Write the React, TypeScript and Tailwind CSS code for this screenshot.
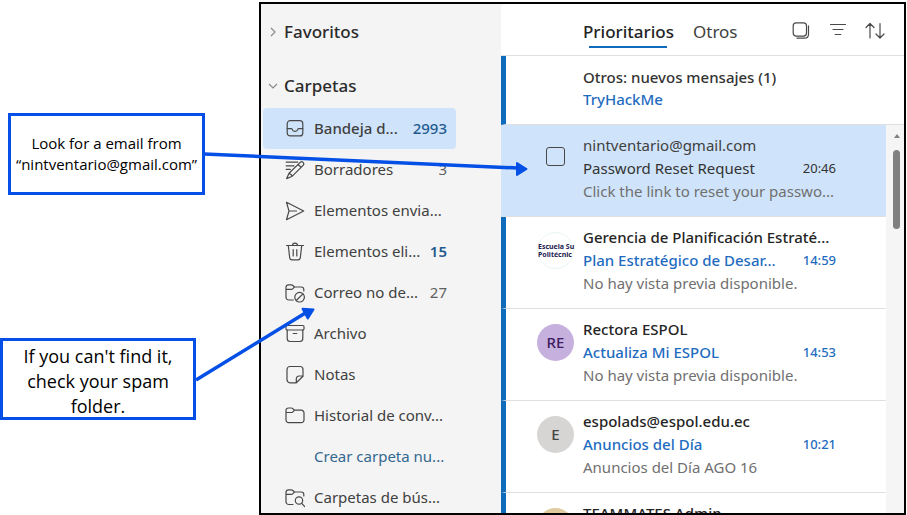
import React from "react";

const appFont = "font-['Noto_Sans','Open_Sans',sans-serif]";

type IconProps = { children: React.ReactNode };

function Icon({ children }: IconProps) {
  return (
    <svg
      viewBox="0 0 20 20"
      className="size-5 shrink-0"
      fill="none"
      stroke="#484848"
      strokeWidth="1.2"
      strokeLinecap="round"
      strokeLinejoin="round"
      aria-hidden="true"
    >
      {children}
    </svg>
  );
}

const icons = {
  inbox: (
    <Icon>
      <rect x="2.2" y="1.7" width="15.6" height="15.2" rx="3" />
      <path d="M2.2 9.600h4.100c.4 0 .7.3.9.7.3 1.200 1.400 2 2.800 2s2.500-.8 2.800-2c.2-.4.5-.7.9-.7h4.100" />
    </Icon>
  ),
  drafts: (
    <Icon>
      <path d="M1.200 2.200h11.500M1.200 5.800h7.800M1.200 9.400h4" />
      <path d="M15.200 2.400a2 2 0 0 1 2.900 2.900L7.300 16.200l-5.600 2.400 2.300-5.300zM13.200 4.500l2.900 2.900M4 13.300c1.600.4 2.700 1.300 3.300 2.900" />
    </Icon>
  ),
  sent: (
    <Icon>
      <path d="M1.500 1.300 18.700 10 1.500 18.700 4 10zM4 10h7.500" />
    </Icon>
  ),
  trash: (
    <Icon>
      <path d="M1.500 3.500h17M7.500 3.500c0-3.200 5-3.200 5 0M3.300 3.500l1.400 12.300c.2 1.300 1 2 2.200 2h6.200c1.200 0 2-.7 2.200-2L16.700 3.500M8.200 7.500v6.500M11.800 7.500v6.500" />
    </Icon>
  ),
  junk: (
    <Icon>
      <path d="M8.300 17H3.800A2.800 2.800 0 0 1 1 14.200V4.300c0-1.500 1-2.500 2.500-2.500h2.700c.7 0 1.200.2 1.700.7L9.500 4h6.700c1.500 0 2.600 1 2.600 2.500V8M1 6.300h5.200c.7 0 1.200-.2 1.700-.7L9.500 4" />
      <circle cx="14.600" cy="14.200" r="4.800" />
      <path d="m11.300 17.500 6.600-6.600" />
    </Icon>
  ),
  archive: (
    <Icon>
      <rect x="1" y="1.500" width="18" height="4.500" rx="1.200" />
      <path d="M2.200 6v8.500c0 1.700 1.300 3 3 3h9.600c1.700 0 3-1.300 3-3V6M8.200 9.500h3.600" />
    </Icon>
  ),
  notes: (
    <Icon>
      <path d="M5 1.500h10a3 3 0 0 1 3 3v6.800L11.300 17.800H5a3 3 0 0 1-3-3V4.500a3 3 0 0 1 3-3zM11.300 17.600v-3.600a3 3 0 0 1 3-3h3.500" />
    </Icon>
  ),
  folder: (
    <Icon>
      <path d="M1 4.500C1 3 2 2 3.500 2h2.700c.7 0 1.200.2 1.700.7L9.500 4.200h6.700A2.700 2.700 0 0 1 19 6.900v7.100a2.700 2.700 0 0 1-2.700 2.700H3.700A2.700 2.700 0 0 1 1 14zM1 6.500h5.200c.7 0 1.200-.2 1.700-.7l1.600-1.600" />
    </Icon>
  ),
  search: (
    <Icon>
      <path d="M8 16.500H3.800A2.800 2.800 0 0 1 1 13.700V4.300c0-1.500 1-2.500 2.500-2.500h2.700c.7 0 1.200.2 1.700.7L9.500 4h6.700c1.500 0 2.600 1 2.600 2.500V8M1 6.300h5.200c.7 0 1.200-.2 1.700-.7L9.500 4" />
      <circle cx="14" cy="12.500" r="3.700" />
      <path d="m16.700 15.300 3 3.200" />
    </Icon>
  ),
};

type Folder = {
  name: string;
  icon?: React.ReactNode;
  count?: string;
  kind?: "selected" | "strong" | "link";
};

const folders: Folder[] = [
  { name: "Bandeja d...", icon: icons.inbox, count: "2993", kind: "selected" },
  { name: "Borradores", icon: icons.drafts, count: "3" },
  { name: "Elementos envia...", icon: icons.sent },
  { name: "Elementos eli...", icon: icons.trash, count: "15", kind: "strong" },
  { name: "Correo no de...", icon: icons.junk, count: "27" },
  { name: "Archivo", icon: icons.archive },
  { name: "Notas", icon: icons.notes },
  { name: "Historial de conv...", icon: icons.folder },
  { name: "Crear carpeta nu...", kind: "link" },
  { name: "Carpetas de bús...", icon: icons.search },
];

function FolderRow({ name, icon, count, kind }: Folder) {
  const selected = kind === "selected";
  return (
    <li>
      <button
        type="button"
        className={`flex h-[41px] w-full items-center rounded pr-[9px] pl-[22px] text-left text-[15px] whitespace-nowrap ${
          selected ? "bg-[#cfe4fa] font-medium" : ""
        }`}
      >
        <span className="mr-[9px] flex w-5 shrink-0">{icon}</span>
        <span className={`flex-1 ${kind === "link" ? "text-[#33688f]" : "text-[#404040]"}`}>{name}</span>
        {count && (
          <span
            className={
              selected
                ? "font-medium text-[#1f5a8f]"
                : kind === "strong"
                  ? "font-semibold text-[#1f5a8f]"
                  : "text-[#616161]"
            }
          >
            {count}
          </span>
        )}
      </button>
    </li>
  );
}

function SectionTitle({ label, open }: { label: string; open: boolean }) {
  return (
    <button
      type="button"
      aria-expanded={open}
      className="flex h-[44px] w-full items-center pl-[5px] text-left text-[17px] font-medium text-[#2b2b2b]"
    >
      <svg
        viewBox="0 0 10 10"
        className="mr-[6px] size-[10px]"
        fill="none"
        stroke="#8a8a8a"
        strokeWidth="1.200"
        aria-hidden="true"
      >
        {open ? <path d="m1 3 4 4 4-4" /> : <path d="m3 1 4 4-4 4" />}
      </svg>
      {label}
    </button>
  );
}

function Sidebar() {
  return (
    <nav className="w-60 shrink-0 bg-[#f4f4f4] pt-[6px] pr-[45px] pl-[2px]">
      <SectionTitle label="Favoritos" open={false} />
      <div className="pt-[10px]">
        <SectionTitle label="Carpetas" open />
        <ul>
          {folders.map((folder) => (
            <FolderRow key={folder.name} {...folder} />
          ))}
        </ul>
      </div>
    </nav>
  );
}

type Mail = {
  from: string;
  subject?: string;
  time?: string;
  preview?: string;
  avatar: React.ReactNode;
  selected?: boolean;
};

function Initials({ text, tone }: { text?: string; tone: string }) {
  return (
    <span className={`flex size-[37px] items-center justify-center rounded-full text-[15px] font-medium ${tone}`}>
      {text}
    </span>
  );
}

const mails: Mail[] = [
  {
    from: "nintventario@gmail.com",
    subject: "Password Reset Request",
    time: "20:46",
    preview: "Click the link to reset your passwo...",
    selected: true,
    avatar: (
      <input
        type="checkbox"
        aria-label="Seleccionar mensaje"
        className="mt-[7px] size-[19px] appearance-none rounded-[3px] border border-[#484848]"
      />
    ),
  },
  {
    from: "Gerencia de Planificación Estraté...",
    subject: "Plan Estratégico de Desar...",
    time: "14:59",
    preview: "No hay vista previa disponible.",
    avatar: (
      <span className="flex size-[37px] flex-col justify-center rounded-full border border-[#e8f5f3] text-[7px] leading-[8px] font-bold whitespace-nowrap text-[#1d1b4f]">
        <span>Escuela Su</span>
        <span>Politécnic</span>
      </span>
    ),
  },
  {
    from: "Rectora ESPOL",
    subject: "Actualiza Mi ESPOL",
    time: "14:53",
    preview: "No hay vista previa disponible.",
    avatar: <Initials text="RE" tone="bg-[#c6b1de] text-[#3f1b5f]" />,
  },
  {
    from: "espolads@espol.edu.ec",
    subject: "Anuncios del Día",
    time: "10:21",
    preview: "Anuncios del Día AGO 16",
    avatar: <Initials text="E" tone="bg-[#d6d5d4] text-[#444444]" />,
  },
  {
    from: "TEAMMATES Admin",
    avatar: <Initials tone="bg-[#dfcb9f]" />,
  },
];

function MailRow({ from, subject, time, preview, avatar, selected }: Mail) {
  return (
    <li
      className={`flex h-[92px] shrink-0 border-b border-b-[#e0e0e0] border-l-[5px] pt-[9px] pr-[50px] text-[15px] leading-[23px] whitespace-nowrap ${
        selected ? "border-l-[#cfe4fa] bg-[#cfe4fa]" : "border-l-[#0f6cbd] bg-white"
      }`}
    >
      <div className="flex w-[77px] shrink-0 justify-center pt-[6px] pl-[22px]">
        <span className="flex w-[55px] justify-center">{avatar}</span>
      </div>
      <div className="min-w-0 flex-1">
        <div className={selected ? "text-[#404040]" : "font-medium text-[#242424]"}>{from}</div>
        <div
          className={`flex items-center justify-between ${
            selected ? "text-[#333333]" : "font-medium text-[#1f6cbf]"
          }`}
        >
          <span>{subject}</span>
          <time className="text-[13px]">{time}</time>
        </div>
        <div className="text-[#707070]">{preview}</div>
      </div>
    </li>
  );
}

function Toolbar() {
  return (
    <div className="flex h-[52px] shrink-0 items-center border-b border-[#e0e0e0] pr-[19px] pl-[82px] text-[17px] text-[#404040]">
      <button type="button" className="flex h-full flex-col items-center pt-[16px] font-medium text-[#242424]">
        <span className="leading-6">Prioritarios</span>
        <span className="mt-[2px] h-[2px] w-[78px] bg-[#0f6cbd]" />
      </button>
      <button type="button" className="ml-[19px] pt-[4px]">
        Otros
      </button>
      <div className="ml-auto flex items-center gap-[17px] pt-[3px]">
        <button type="button" aria-label="Seleccionar">
          <Icon>
            <rect x="2.200" y="1.800" width="13.300" height="13.300" rx="3" />
            <path d="M17.500 4.800v8.400c0 2.300-1.700 4-4 4H6" />
          </Icon>
        </button>
        <button type="button" aria-label="Filtrar">
          <Icon>
            <path d="M2.500 3.500h15M5 8.500h10M7.200 13.500h5.600" />
          </Icon>
        </button>
        <button type="button" aria-label="Ordenar">
          <Icon>
            <path d="M5 17V2.500M1 6.500l4-4 4 4M15 2.500V17M11 13l4 4 4-4" />
          </Icon>
        </button>
      </div>
    </div>
  );
}

function MessagePane() {
  return (
    <section className="flex min-w-0 flex-1 flex-col overflow-hidden rounded-tl bg-white">
      <Toolbar />
      <div className="h-[69px] shrink-0 border-b border-b-[#e0e0e0] border-l-[5px] border-l-[#0f6cbd] pt-[10px] pl-[77px] text-[15px] leading-[22px] font-medium text-[#333333]">
        <div>Otros: nuevos mensajes (1)</div>
        <div className="text-[#1f6cbf]">TryHackMe</div>
      </div>
      <div className="flex min-h-0 flex-1">
        <ul className="flex min-w-0 flex-1 flex-col overflow-hidden">
          {mails.map((mail) => (
            <MailRow key={mail.from} {...mail} />
          ))}
        </ul>
        <div className="flex w-[18px] shrink-0 flex-col items-center bg-[#f5f5f5] pt-[9px] pl-[3px]">
          <svg viewBox="0 0 6 4" className="h-1 w-[6px]" fill="#808080" aria-hidden="true">
            <path d="M3 0l3 4H0z" />
          </svg>
          <div className="mt-3 h-[79px] w-[7px] rounded-full bg-[#808080]" />
        </div>
      </div>
    </section>
  );
}

function Arrows() {
  return (
    <svg
      className="pointer-events-none absolute top-0 left-0 h-[515px] w-[907px]"
      viewBox="0 0 907 515"
      fill="#0450e6"
      stroke="#0450e6"
      strokeLinejoin="round"
      aria-hidden="true"
    >
      <path d="M204 154 518 168" strokeWidth="3.500" />
      <path d="M517 163v12l9.500-6z" strokeWidth="2" />
      <path d="M196 380 307 312" strokeWidth="3.500" />
      <path d="m302.500 308.800 11 .6-5.700 9z" strokeWidth="2" />
    </svg>
  );
}

export default function App() {
  return (
    <main className="relative flex h-screen overflow-hidden bg-white pt-[2px] pr-px">
      <aside className="w-[259px] shrink-0 pt-[111px] text-center font-['Open_Sans',sans-serif] text-black">
        <p className="ml-2 flex h-[82px] w-[197px] items-center justify-center border-[3px] border-[#0450e6] text-[15px] leading-[21px] whitespace-nowrap">
          <span>
            Look for a email from
            <br />
            “nintventario@gmail.com”
          </span>
        </p>
        <p className="mt-[143px] flex h-[82px] w-[196px] items-center justify-center border-[3px] border-[#0450e6] pt-[4px] text-[18px] leading-[25px]">
          <span>
            If you can't find it,
            <br />
            check your spam
            <br />
            folder.
          </span>
        </p>
      </aside>
      <div className={`flex min-w-0 flex-1 overflow-hidden border-2 border-black bg-[#f4f4f4] ${appFont}`}>
        <Sidebar />
        <MessagePane />
      </div>
      <Arrows />
    </main>
  );
}
